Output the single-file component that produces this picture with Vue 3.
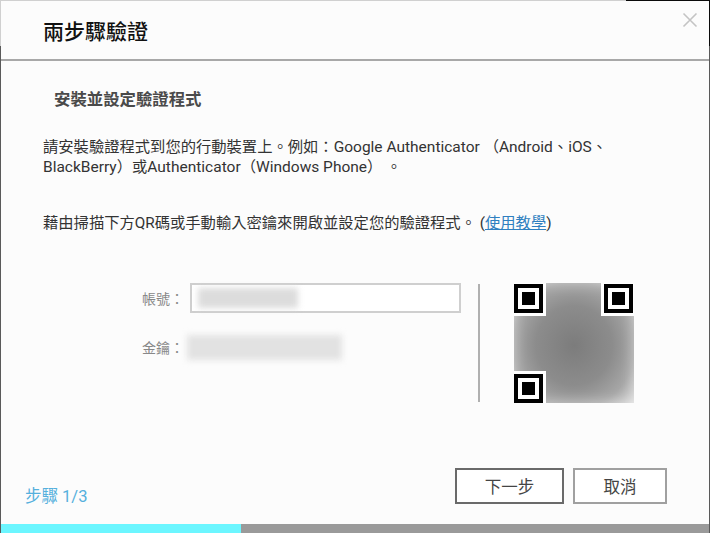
<script setup>
const finders = ['tl', 'tr', 'bl']
</script>

<template>
  <div class="page">
    <div class="backdrop-dark"></div>
    <div class="backdrop-corner"></div>
    <section class="dialog">
      <header class="head">
        <h1 class="title">兩步驟驗證</h1>
        <svg class="close" width="16" height="16" viewBox="0 0 16 16" aria-label="close">
          <path d="M1.5 1.5L14.5 14.5M14.5 1.5L1.5 14.5" stroke="#c4c4c4" stroke-width="1.6" fill="none" />
        </svg>
      </header>
      <main class="body">
        <h2 class="sub">安裝並設定驗證程式</h2>
        <p class="para">請安裝驗證程式到您的行動裝置上。例如：<span class="lat">Google Authenticator </span>（<span class="lat">Android</span>、<span class="lat">iOS</span>、<br /><span class="lat">BlackBerry</span>）或<span class="lat">Authenticator</span>（<span class="lat">Windows Phone</span>） 。</p>
        <p class="para second">藉由掃描下方QR碼或手動輸入密鑰來開啟並設定您的驗證程式。 (<a class="link">使用教學</a>)</p>
        <div class="setup">
          <div class="fields">
            <div class="row">
              <span class="label">帳號：</span>
              <div class="input"><span class="smudge account"></span></div>
            </div>
            <div class="row key">
              <span class="label">金鑰：</span>
              <span class="smudge secret"></span>
            </div>
          </div>
          <div class="divider"></div>
          <div class="qr">
            <div class="qr-blur"></div>
            <div v-for="f in finders" :key="f" class="finder" :class="f"><i></i></div>
          </div>
        </div>
      </main>
      <footer class="foot">
        <span class="step">步驟 1/3</span>
        <div class="actions">
          <button class="btn primary">下一步</button>
          <button class="btn">取消</button>
        </div>
      </footer>
      <div class="progress"><div class="done"></div></div>
    </section>
  </div>
</template>

<style>
html, body { margin: 0; background: #5a5a5a; }
</style>

<style scoped>
.page {
  position: relative;
  width: 710px;
  height: 533px;
  overflow: hidden;
  background: #5a5a5a;
  font-family: Roboto, "Noto Sans CJK TC", sans-serif;
}
.backdrop-dark {
  position: absolute;
  left: 0;
  top: 0;
  width: 710px;
  height: 46px;
  background: #d0d0d0;
}
.backdrop-corner {
  position: absolute;
  left: 626px;
  top: 0;
  width: 84px;
  height: 46px;
  background: #0a0a0a;
}
.dialog {
  position: relative;
  box-sizing: border-box;
  margin: 1px 1px 0 1px;
  width: 708px;
  height: 532px;
  background: #fcfcfc;
  display: flex;
  flex-direction: column;
}
.head {
  box-sizing: border-box;
  height: 60px;
  flex: none;
  border-bottom: 2px solid #a8a8a8;
  padding: 17px 11px 0 42px;
  display: flex;
  justify-content: space-between;
  align-items: flex-start;
}
.title {
  margin: 0;
  font-size: 21px;
  line-height: 28px;
  font-weight: 500;
  color: #111;
}
.close { margin-top: -6px; }
.body {
  flex: 1;
  padding: 27px 0 0 42px;
  color: #333;
}
.sub {
  margin: 0 0 0 11px;
  font-size: 16.4px;
  line-height: 24px;
  font-weight: 700;
  color: #4a4a4a;
}
.para {
  margin: 25px 0 0;
  font-size: 15.3px;
  line-height: 20px;
  white-space: nowrap;
}
.lat { font-size: 15.5px; line-height: 1; }
.second { margin-top: 36px; }
.link { color: #2f7fc0; text-decoration: underline; }
.setup {
  margin-top: 50px;
  display: flex;
  align-items: flex-start;
}
.fields { width: 435px; padding-left: 99px; box-sizing: border-box; }
.row {
  display: flex;
  align-items: center;
  height: 30px;
}
.row.key { margin-top: 20px; height: 28px; }
.label {
  width: 48px;
  flex: none;
  font-size: 14px;
  color: #888;
}
.input {
  box-sizing: border-box;
  width: 271px;
  height: 30px;
  border: 2px solid #cfcfcf;
  background: #fff;
  padding: 3px 6px;
}
.smudge {
  display: block;
  background: #dcdcdc;
  filter: blur(3px);
}
.account { width: 100px; height: 20px; }
.secret { width: 155px; height: 25px; margin-left: -3px; background: #e2e2e2; }
.divider {
  width: 2px;
  height: 118px;
  background: #b0b0b0;
  margin-top: 1px;
}
.qr {
  position: relative;
  margin-left: 34px;
  width: 120px;
  height: 120px;
  overflow: hidden;
}
.qr-blur {
  position: absolute;
  inset: 0;
  background: radial-gradient(ellipse at 50% 52%, #7c7c7c 0%, #8c8c8c 45%, #a6a6a6 72%, #e0e0e0 100%);
  box-shadow: inset 0 0 14px rgba(255, 255, 255, 0.45);
}
.finder {
  position: absolute;
  box-sizing: border-box;
  width: 29px;
  height: 29px;
  border: 4px solid #000;
  background: #fff;
  outline: 3px solid #fff;
  display: flex;
  align-items: center;
  justify-content: center;
}
.finder i { display: block; width: 13px; height: 13px; background: #000; }
.tl { left: 0; top: 1px; }
.tr { right: 1px; top: 1px; }
.bl { left: 0; bottom: 0; }
.foot {
  flex: none;
  height: 63px;
  display: flex;
  justify-content: space-between;
  padding: 0 42px 0 24px;
}
.step {
  margin-top: 25px;
  font-size: 16.5px;
  line-height: 22px;
  color: #55b0dd;
}
.actions { display: flex; gap: 9px; align-items: flex-start; margin-top: 7px; }
.btn {
  box-sizing: border-box;
  height: 36px;
  width: 94px;
  padding: 0;
  border: 2px solid #a0a0a0;
  background: #fff;
  font: inherit;
  font-size: 16.5px;
  color: #444;
}
.primary { width: 109px; border-color: #6a6a6a; }
.progress {
  flex: none;
  height: 9px;
  background: #9a9a9a;
}
.done { width: 240px; height: 100%; background: #6cf6ff; }
</style>
